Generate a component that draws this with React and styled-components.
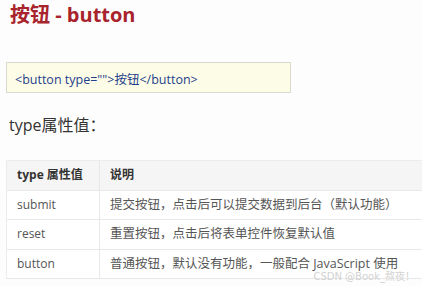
import React from "react";
import styled, { createGlobalStyle } from "styled-components";

const GlobalStyle = createGlobalStyle`
  html, body {
    margin: 0;
    padding: 0;
    background: #fdfdfd;
  }
  body {
    font-family: "Open Sans", "Noto Sans CJK SC", sans-serif;
    width: 422px;
    height: 286px;
    overflow: hidden;
  }
`;

const rows = [
  { type: "submit", desc: "提交按钮，点击后可以提交数据到后台（默认功能）" },
  { type: "reset", desc: "重置按钮，点击后将表单控件恢复默认值" },
  { type: "button", desc: "普通按钮，默认没有功能，一般配合 JavaScript 使用" },
];

const App = () => (
  <Page>
    <GlobalStyle />
    <Title>按钮 - button</Title>
    <CodeBox>
      <Code>&lt;button type=""&gt;按钮&lt;/button&gt;</Code>
    </CodeBox>
    <Label>type属性值：</Label>
    <Table>
      <HeadRow>
        <Cell $first $head>type 属性值</Cell>
        <Cell $head>说明</Cell>
      </HeadRow>
      {rows.map((row) => (
        <Row key={row.type}>
          <Cell $first>{row.type}</Cell>
          <Cell $desc>{row.desc}</Cell>
        </Row>
      ))}
    </Table>
    <Watermark>CSDN @Book_熬夜！</Watermark>
  </Page>
);

export default App;

const Page = styled.div`
  position: relative;
  height: 286px;
  padding: 0 0 0 6px;
  box-sizing: border-box;
`;

const Title = styled.h1`
  margin: 0;
  padding: 2px 0 0 4px;
  font-family: "Open Sans", "Noto Sans CJK SC", sans-serif;
  font-size: 20px;
  font-weight: 700;
  line-height: 26px;
  color: #a8232c;
`;

const CodeBox = styled.div`
  margin-top: 34px;
  width: 285px;
  height: 31px;
  box-sizing: border-box;
  display: flex;
  align-items: center;
  padding: 0 0 0 8px;
  background: #fdfde7;
  border: 1px solid #d9d9cf;
`;

const Code = styled.span`
  font-family: "Open Sans", "Noto Sans CJK SC", sans-serif;
  font-size: 12.5px;
  color: #1f3f8c;
  padding-top: 2px;
`;

const Label = styled.div`
  margin-top: 21px;
  padding-left: 3px;
  font-size: 16px;
  line-height: 22px;
  color: #333;
`;

const Table = styled.div`
  margin-top: 24px;
  width: 430px;
  border-left: 1px solid #ececec;
  border-top: 1px solid #ececec;
`;

const Row = styled.div`
  display: grid;
  grid-template-columns: 93px 1fr;
  height: 29.5px;
  border-bottom: 1px solid #e8e8e8;
  box-sizing: border-box;
  background: #ffffff;
`;

const HeadRow = styled(Row)`
  background: #f5f5f5;
`;

const Cell = styled.div`
  display: flex;
  align-items: center;
  padding-left: 10px;
  border-right: ${(p) => (p.$first ? "1px solid #e8e8e8" : "none")};
  font-size: ${(p) => (p.$desc ? "12.5px" : "12px")};
  line-height: 14px;
  font-weight: ${(p) => (p.$head ? 700 : 400)};
  color: ${(p) => (p.$head ? "#333" : "#555")};
  white-space: nowrap;
`;

const Watermark = styled.div`
  position: absolute;
  right: 7px;
  bottom: 4px;
  font-family: "DejaVu Sans", "Noto Sans CJK SC", sans-serif;
  font-size: 10px;
  line-height: 10px;
  color: #d2d2d2;
`;
